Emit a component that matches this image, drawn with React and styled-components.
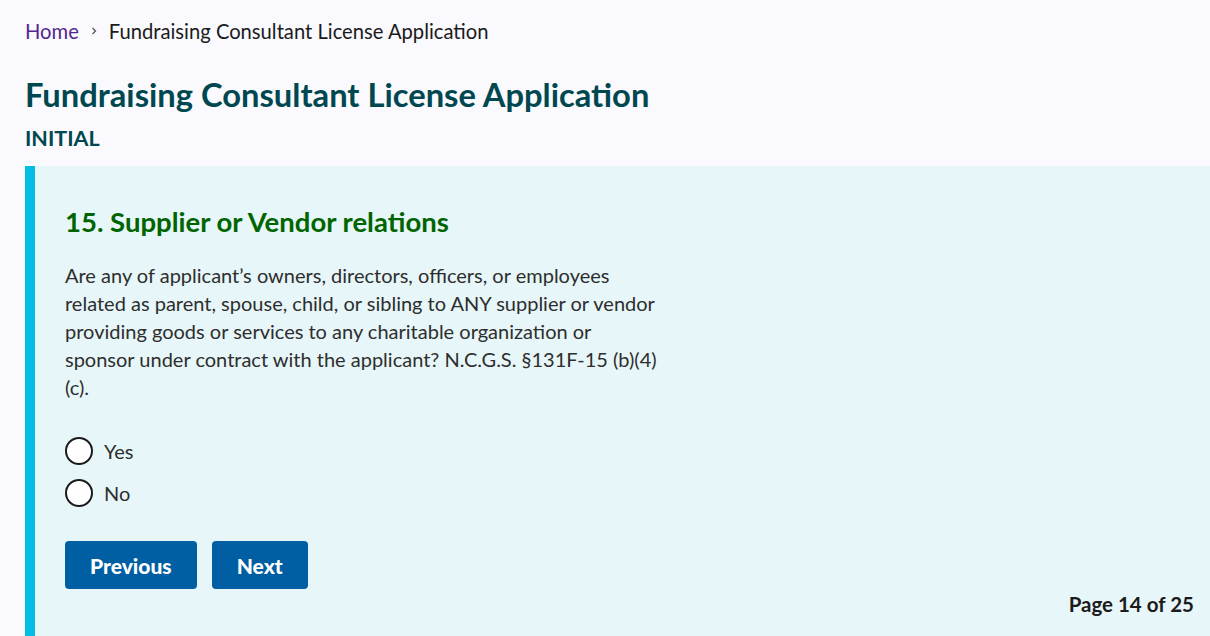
import React from 'react'
import styled, { createGlobalStyle } from 'styled-components'

const GlobalStyle = createGlobalStyle`
  html, body {
    margin: 0;
    padding: 0;
    background: #f9f9fe;
    overflow: hidden;
  }
  body {
    font-family: Lato, "Liberation Sans", sans-serif;
    color: #1b1b1b;
  }
`;

const Page = styled.div`
  width: 1210px;
  height: 636px;
  padding-left: 25px;
  box-sizing: border-box;
  display: flex;
  flex-direction: column;
`;

const Breadcrumbs = styled.nav`
  display: flex;
  align-items: center;
  gap: 10px;
  font-size: 20.2px;
  padding-top: 18px;
  height: 26px;
`;

const Crumb = styled.span`
  color: ${p => (p.$link ? '#54278f' : '#1b1b1b')};
`;

const Sep = styled.svg`
  width: 10px;
  height: 10px;
`;

const Title = styled.h1`
  margin: 31px 0 0;
  font-size: 32.7px;
  font-weight: 700;
  color: #00474f;
  line-height: 40px;
`;

const Subtitle = styled.h2`
  margin: 9px 0 0;
  font-size: 21.5px;
  font-weight: 700;
  color: #00474f;
  line-height: 28px;
`;

const Panel = styled.section`
  margin-top: 14px;
  flex: 1;
  background: #e7f6f8;
  border-left: 10px solid #00bde3;
  padding: 40px 16px 0 30px;
  display: flex;
  flex-direction: column;
`;

const Question = styled.h3`
  margin: 0;
  font-size: 27.5px;
  font-weight: 700;
  color: #006400;
  line-height: 32px;
`;

const Body = styled.p`
  margin: 23px 0 0;
  width: 598px;
  font-size: 20px;
  line-height: 28px;
  color: #2e2e2e;
`;

const Options = styled.div`
  margin-top: 36px;
  display: flex;
  flex-direction: column;
  gap: 14px;
`;

const Option = styled.label`
  display: flex;
  align-items: center;
  gap: 11px;
  font-size: 20px;
  color: #2e2e2e;
  cursor: pointer;
`;

const Circle = styled.span`
  width: 24px;
  height: 24px;
  border: 2.5px solid #1b1b1b;
  border-radius: 50%;
  background: #fff;
  flex-shrink: 0;
`;

const Actions = styled.div`
  margin-top: 34px;
  display: flex;
  gap: 15px;
`;

const Button = styled.button`
  height: 48px;
  padding: 0 25px;
  background: #005ea2;
  color: #fff;
  border: none;
  border-radius: 4px;
  font-family: inherit;
  font-size: 21px;
  font-weight: 900;
  cursor: pointer;
`;

const Footer = styled.div`
  margin-top: 3px;
  text-align: right;
  font-size: 20.5px;
  font-weight: 700;
  color: #1b1b1b;
`;

const App = () => {
  return (
    <>
      <GlobalStyle />
      <Page>
        <Breadcrumbs>
          <Crumb $link>Home</Crumb>
          <Sep viewBox="0 0 10 10">
            <path d="M3.5 2 L6.5 5 L3.5 8" fill="none" stroke="#555" strokeWidth="1.3" />
          </Sep>
          <Crumb>Fundraising Consultant License Application</Crumb>
        </Breadcrumbs>
        <Title>Fundraising Consultant License Application</Title>
        <Subtitle>INITIAL</Subtitle>
        <Panel>
          <Question>15. Supplier or Vendor relations</Question>
          <Body>
            Are any of applicant’s owners, directors, officers, or employees related as parent,
            spouse, child, or sibling to ANY supplier or vendor providing goods or services to any
            charitable organization or sponsor under contract with the applicant? N.C.G.S. §131F-15
            (b)(4) (c).
          </Body>
          <Options>
            <Option><Circle />Yes</Option>
            <Option><Circle />No</Option>
          </Options>
          <Actions>
            <Button>Previous</Button>
            <Button>Next</Button>
          </Actions>
          <Footer>Page 14 of 25</Footer>
        </Panel>
      </Page>
    </>
  )
}

export default App
